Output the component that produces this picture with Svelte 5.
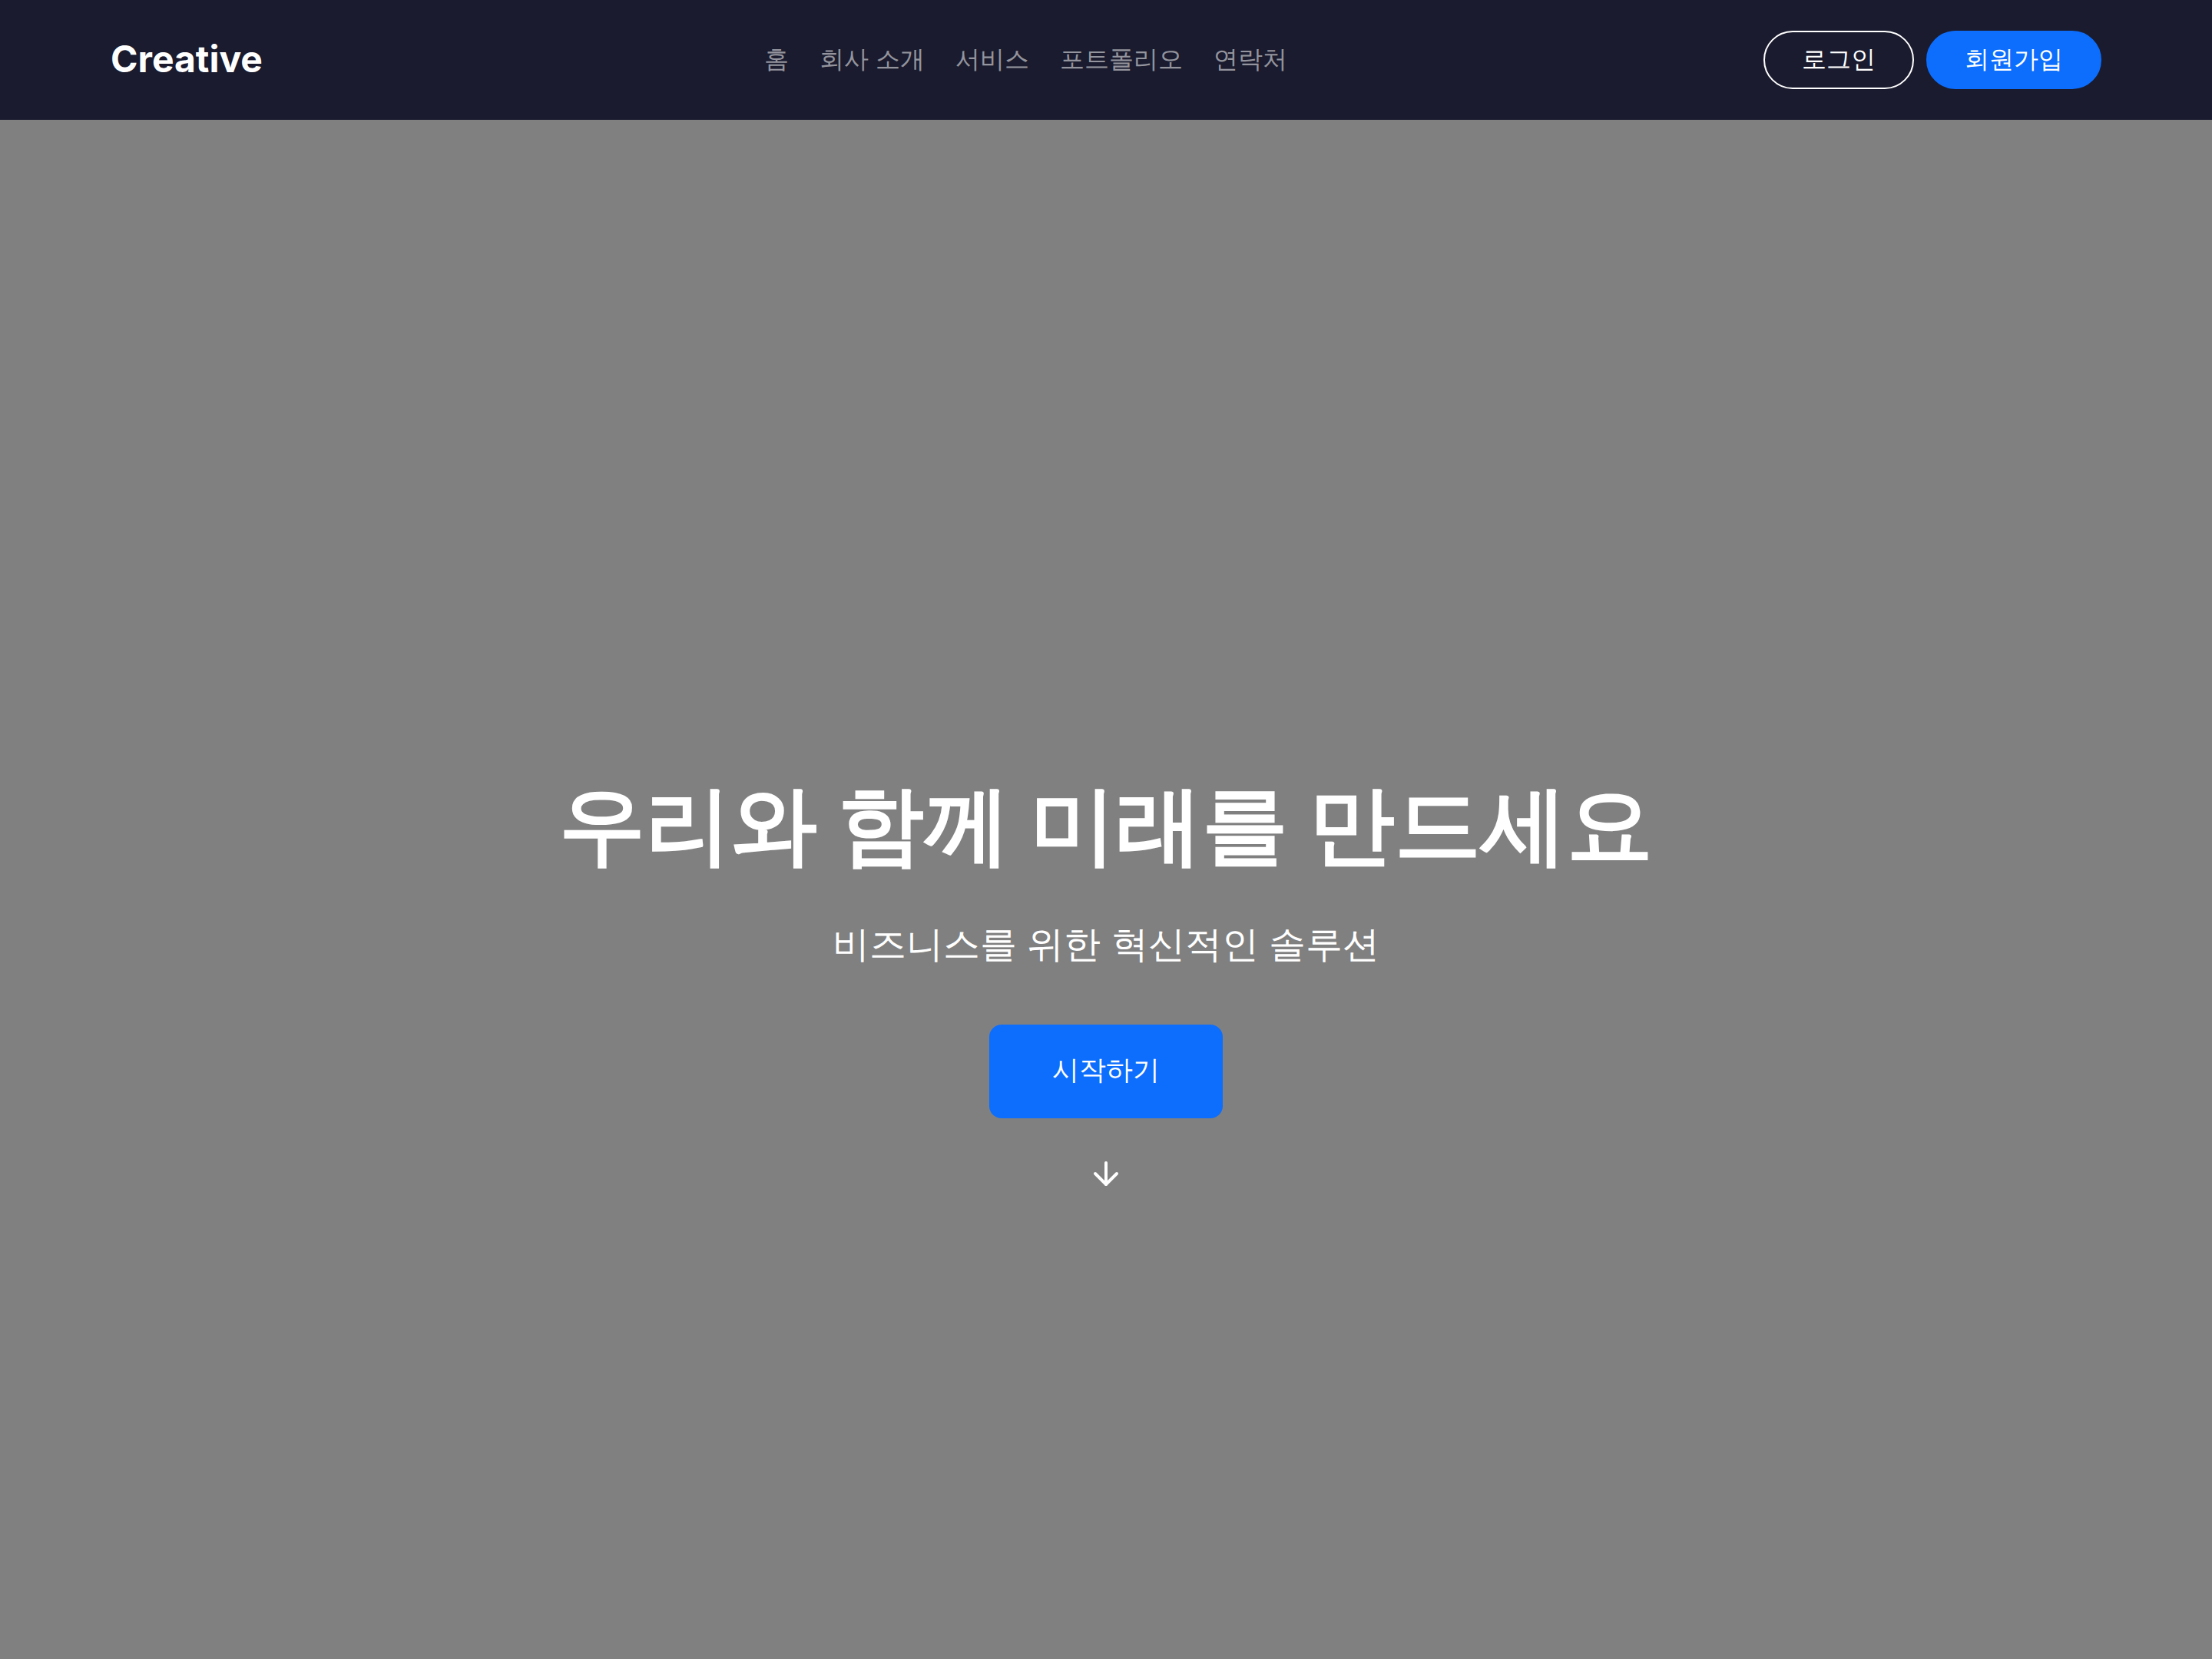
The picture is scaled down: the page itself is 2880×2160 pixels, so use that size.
<script>
	const links = ['홈', '회사 소개', '서비스', '포트폴리오', '연락처'];
</script>

<div class="page">
	<header class="topbar">
		<a class="brand" href="#home">Creative</a>
		<nav class="links">
			{#each links as link}
				<a href="#{link}">{link}</a>
			{/each}
		</nav>
		<div class="actions">
			<button class="pill outline">로그인</button>
			<button class="pill solid">회원가입</button>
		</div>
	</header>

	<main class="hero">
		<h1>우리와 함께 미래를 만드세요</h1>
		<p>비즈니스를 위한 혁신적인 솔루션</p>
		<button class="cta">시작하기</button>
		<svg class="arrow" width="48" height="48" viewBox="0 0 24 24" fill="none" stroke="currentColor" stroke-width="2" stroke-linecap="round" stroke-linejoin="round">
			<path d="M12 5v14" />
			<path d="m19 12-7 7-7-7" />
		</svg>
	</main>
</div>

<style>
	:global(body) {
		margin: 0;
		font-family: Inter, sans-serif;
	}

	.page {
		height: 2160px;
		display: flex;
		flex-direction: column;
		overflow: hidden;
	}

	.topbar {
		height: 156px;
		flex-shrink: 0;
		box-sizing: border-box;
		padding: 0 144px;
		display: flex;
		align-items: center;
		justify-content: space-between;
		background: #1a1b2e;
	}

	.brand {
		padding-bottom: 3px;
		font-size: 48px;
		font-weight: 700;
		color: #fff;
		text-decoration: none;
	}

	.links {
		display: flex;
		gap: 40px;
		padding-left: 34px;
	}

	.links a {
		font-size: 32px;
		color: rgba(255, 255, 255, 0.55);
		text-decoration: none;
	}

	.actions {
		display: flex;
		gap: 16px;
	}

	.pill {
		height: 76px;
		padding: 0 48px;
		border-radius: 40px;
		font: inherit;
		font-size: 32px;
		color: #fff;
		cursor: pointer;
	}

	.outline {
		background: transparent;
		border: 2px solid #fff;
	}

	.solid {
		background: #0d6efd;
		border: 2px solid #0d6efd;
	}

	.hero {
		flex: 1;
		background: #808080;
		color: #fff;
		display: flex;
		flex-direction: column;
		align-items: center;
		padding-top: 849px;
		box-sizing: border-box;
	}

	h1 {
		margin: 0;
		font-size: 112px;
		font-weight: 700;
		line-height: 1.2;
	}

	p {
		margin: 54px 0 0;
		font-size: 48px;
		line-height: 1.5;
	}

	.cta {
		margin-top: 68.6px;
		width: 304px;
		height: 122px;
		padding-bottom: 3px;
		border: none;
		border-radius: 16px;
		background: #0d6efd;
		color: #fff;
		font: inherit;
		font-size: 35.2px;
		cursor: pointer;
	}

	.arrow {
		margin-top: 48px;
	}
</style>
